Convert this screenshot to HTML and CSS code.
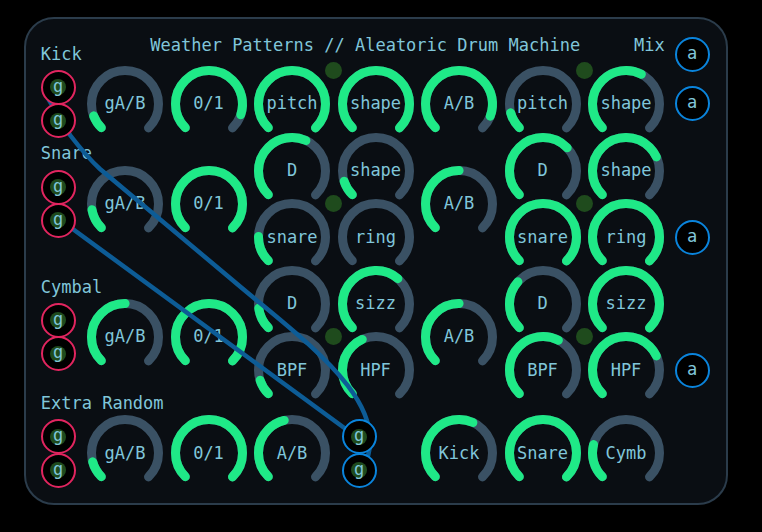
FILE: index.html
```html
<!DOCTYPE html>
<html lang="en">
<head>
  <meta charset="UTF-8">
  <meta name="viewport" content="width=device-width, initial-scale=1.0">
  <title>Weather Patterns</title>
  <link rel="stylesheet" href="styles.css">
</head>
<body>
  <div class="panel">
    <svg class="cables" viewBox="26 19 700 484">
      <path d="M49,100 L70,135 C80,148 88,158 100,169 L230,278 C300,338 400,405 362,470" />
      <path d="M55,216 Q210,330 358,438" />
    </svg>
    <div class="rack" id="rack">
      <div class="title">Weather Patterns // Aleatoric Drum Machine</div>
      <div class="mix">Mix</div>
      <div class="section kick">Kick</div>
      <div class="section snare">Snare</div>
      <div class="section cymbal">Cymbal</div>
      <div class="section extra">Extra Random</div>
    </div>
  </div>
  <script>
    const rack = document.getElementById('rack');
    const R = 33.5;
    const CIRC = 2 * Math.PI * R;
    const ARC = CIRC * 0.75;

    // label, knob column (1-7), start row, value
    const knobs = [
      ['gA/B', 1, 3, 0.09], ['0/1', 2, 3, 0.9], ['pitch', 3, 3, 1], ['shape', 4, 3, 1],
      ['A/B', 5, 3, 0.91], ['pitch', 6, 3, 0.11], ['shape', 7, 3, 0.6],
      ['gA/B', 1, 9, 0.13], ['0/1', 2, 9, 1], ['D', 3, 7, 0.59], ['shape', 4, 7, 0.1],
      ['A/B', 5, 9, 0.5], ['D', 6, 7, 0.67], ['shape', 7, 7, 0.74],
      ['snare', 3, 11, 0.17], ['ring', 4, 11, 0], ['snare', 6, 11, 1], ['ring', 7, 11, 1],
      ['gA/B', 1, 17, 0.5], ['0/1', 2, 17, 1], ['D', 3, 15, 0.14], ['sizz', 4, 15, 0.65],
      ['A/B', 5, 17, 0.5], ['D', 6, 15, 0.32], ['sizz', 7, 15, 1],
      ['BPF', 3, 19, 0.1], ['HPF', 4, 19, 0.41], ['BPF', 6, 19, 0.6], ['HPF', 7, 19, 0.74],
      ['gA/B', 1, 24, 0.11], ['0/1', 2, 24, 1], ['A/B', 3, 24, 0.45],
      ['Kick', 5, 24, 0.59], ['Snare', 6, 24, 1], ['Cymb', 7, 24, 0.22]
    ];
    knobs.forEach(function([label, col, row, v]) {
      const el = document.createElement('div');
      el.className = 'knob';
      el.style.gridArea = `${row} / ${col + 1} / span 4 / span 1`;
      const val = v > 0
        ? `<circle class="val" cx="38" cy="38" r="${R}" stroke-dasharray="${(ARC * v).toFixed(1)} ${CIRC.toFixed(1)}"/>`
        : '';
      el.innerHTML =
        `<svg viewBox="0 0 76 76"><g transform="rotate(135 38 38)">` +
        `<circle class="track" cx="38" cy="38" r="${R}" stroke-dasharray="${ARC.toFixed(1)} ${CIRC.toFixed(1)}"/>` +
        val + `</g></svg><span>${label}</span>`;
      rack.appendChild(el);
    });

    // kind, letter, grid column, start row, plug lamp
    const jacks = [
      ['in', 'g', 1, 3, true], ['in', 'g', 1, 5, true],
      ['in', 'g', 1, 9, true], ['in', 'g', 1, 11, true],
      ['in', 'g', 1, 17, true], ['in', 'g', 1, 19, true],
      ['in', 'g', 1, 24, true], ['in', 'g', 1, 26, true],
      ['out', 'a', 9, 1, false], ['out', 'a', 9, 4, false],
      ['out', 'a', 9, 12, false], ['out', 'a', 9, 20, false],
      ['out shift', 'g', 5, 24, true], ['out shift', 'g', 5, 26, true]
    ];
    jacks.forEach(function([kind, letter, col, row, lamp]) {
      const el = document.createElement('div');
      el.className = 'jack ' + kind;
      el.style.gridArea = `${row} / ${col} / span 2 / span 1`;
      el.innerHTML = (lamp ? '<i class="plug"></i>' : '') + `<span>${letter}</span>`;
      rack.appendChild(el);
    });

    // indicator lamps sit on the grid lines between knob pairs
    [[4, 2], [7, 2], [4, 10], [7, 10], [4, 18], [7, 18]].forEach(function([col, row]) {
      const el = document.createElement('div');
      el.className = 'lamp';
      el.style.gridArea = `${row} / ${col} / span 2 / span 2`;
      rack.appendChild(el);
    });
  </script>
</body>
</html>
```

FILE: styles.css
```css
:root {
  --bg: #0a0e13;
  --edge: #2b3c4b;
  --text: #80c6da;
  --green: #1fe987;
  --track: #3a5164;
  --lamp: #1f4b1d;
  --red: #e1255f;
  --blue: #0a84dc;
  --cable: #0d5c96;
}
html, body {
  margin: 0;
  padding: 0;
  background: #000;
  font-family: 'DejaVu Sans Mono', 'Liberation Mono', monospace;
  color: var(--text);
}
.panel {
  position: relative;
  box-sizing: border-box;
  width: 704px;
  height: 488px;
  margin: 17px 0 0 24px;
  padding: 18.4px 0 0 6.75px;
  border: 2px solid var(--edge);
  border-radius: 30px;
  background: var(--bg);
}
.rack {
  display: grid;
  grid-template-columns: 50.5px repeat(7, 83.5px) 48.5px;
  grid-template-rows: repeat(27, 16.65px);
  font-size: 17px;
}
/* patch cables over the knobs, under the jacks */
.cables {
  position: absolute;
  left: 0;
  top: 0;
  width: 700px;
  height: 484px;
  z-index: 1;
  pointer-events: none;
}
.cables path {
  fill: none;
  stroke: var(--cable);
  stroke-width: 4.5;
  stroke-linecap: round;
}
.title {
  grid-row: 1;
  grid-column: 2 / span 7;
  justify-self: start;
  align-self: center;
  margin-left: 67px;
  line-height: 1;
  white-space: nowrap;
}
.mix {
  grid-row: 1;
  grid-column: 8;
  justify-self: end;
  align-self: center;
  margin-right: 3px;
  line-height: 1;
}
.section {
  grid-column: 1 / span 3;
  justify-self: start;
  align-self: center;
  margin-left: 8px;
  line-height: 1;
  white-space: nowrap;
}
.kick { grid-row: 1 / span 2; }
.snare { grid-row: 7 / span 2; }
.cymbal { grid-row: 15 / span 2; }
.extra { grid-row: 22 / span 2; }

.knob {
  display: grid;
  place-items: center;
}
.knob svg, .knob span {
  grid-area: 1 / 1;
}
.knob svg {
  width: 76px;
  height: 76px;
  margin: -5px 0;
  overflow: visible;
}
.knob circle {
  fill: none;
  stroke-width: 9;
  stroke-linecap: round;
}
.knob .track { stroke: var(--track); }
.knob .val { stroke: var(--green); }
.knob span {
  line-height: 1;
  white-space: nowrap;
}

.jack {
  position: relative;
  z-index: 2;
  box-sizing: border-box;
  width: 35px;
  height: 35px;
  margin: -1px 0;
  justify-self: center;
  align-self: center;
  display: grid;
  place-items: center;
  border-radius: 50%;
  border: 2.5px solid var(--red);
  background: #000;
}
.jack.out { border-color: var(--blue); }
.jack.shift {
  justify-self: start;
  margin-left: 7.75px;
}
.jack .plug, .jack span {
  grid-area: 1 / 1;
}
.jack .plug {
  width: 16px;
  height: 16px;
  border-radius: 50%;
  background: var(--lamp);
}
.jack span {
  position: relative;
  line-height: 1;
  margin-top: -2px;
}
.lamp {
  justify-self: center;
  align-self: center;
  width: 17px;
  height: 17px;
  border-radius: 50%;
  background: var(--lamp);
}
```
